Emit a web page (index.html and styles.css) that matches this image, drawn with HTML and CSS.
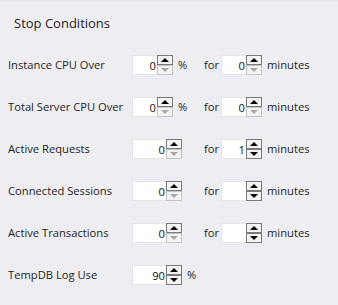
FILE: index.html
```html
<!DOCTYPE html>
<html>
<head>
<meta charset="utf-8">
<link rel="stylesheet" href="styles.css">
</head>
<body>
<div class="panel">
  <h2 class="title">Stop Conditions</h2>
  <div class="rows">
    <div class="row">
      <span class="label">Instance CPU Over</span>
      <span class="cell">
        <span class="spin"><span class="val">0</span><span class="btns"><span class="btn up"></span><span class="btn down off"></span></span></span>
        <span class="unit">%</span>
      </span>
      <span class="for">for</span>
      <span class="spin"><span class="val">0</span><span class="btns"><span class="btn up"></span><span class="btn down off"></span></span></span>
      <span class="unit">minutes</span>
    </div>
    <div class="row">
      <span class="label">Total Server CPU Over</span>
      <span class="cell">
        <span class="spin"><span class="val">0</span><span class="btns"><span class="btn up"></span><span class="btn down off"></span></span></span>
        <span class="unit">%</span>
      </span>
      <span class="for">for</span>
      <span class="spin"><span class="val">0</span><span class="btns"><span class="btn up"></span><span class="btn down off"></span></span></span>
      <span class="unit">minutes</span>
    </div>
    <div class="row">
      <span class="label">Active Requests</span>
      <span class="cell">
        <span class="spin wide"><span class="val">0</span><span class="btns"><span class="btn up"></span><span class="btn down off"></span></span></span>
      </span>
      <span class="for">for</span>
      <span class="spin"><span class="val">1</span><span class="btns"><span class="btn up"></span><span class="btn down"></span></span></span>
      <span class="unit">minutes</span>
    </div>
    <div class="row">
      <span class="label">Connected Sessions</span>
      <span class="cell">
        <span class="spin wide"><span class="val">0</span><span class="btns"><span class="btn up"></span><span class="btn down off"></span></span></span>
      </span>
      <span class="for">for</span>
      <span class="spin"><span class="val"></span><span class="btns"><span class="btn up"></span><span class="btn down"></span></span></span>
      <span class="unit">minutes</span>
    </div>
    <div class="row">
      <span class="label">Active Transactions</span>
      <span class="cell">
        <span class="spin wide"><span class="val">0</span><span class="btns"><span class="btn up"></span><span class="btn down off"></span></span></span>
      </span>
      <span class="for">for</span>
      <span class="spin"><span class="val"></span><span class="btns"><span class="btn up"></span><span class="btn down"></span></span></span>
      <span class="unit">minutes</span>
    </div>
    <div class="row">
      <span class="label">TempDB Log Use</span>
      <span class="cell">
        <span class="spin wide"><span class="val">90</span><span class="btns"><span class="btn up"></span><span class="btn down"></span></span></span>
        <span class="unit">%</span>
      </span>
    </div>
  </div>
</div>
</body>
</html>
```
FILE: styles.css
```css
html, body {
  margin: 0;
  padding: 0;
  background: #eeeef2;
}
body {
  width: 338px;
  height: 305px;
  overflow: hidden;
  font-family: "Open Sans", "Noto Sans", sans-serif;
  color: #1e1e1e;
}
.panel {
  border-top: 1px solid #e2e2e7;
  padding-left: 8px;
}
.title {
  margin: 13px 0 23px 6px;
  font-size: 13px;
  font-weight: normal;
  line-height: 18px;
}
.rows {
  display: flex;
  flex-direction: column;
  gap: 22px;
}
.row {
  display: grid;
  grid-template-columns: 124px 72px 17px 41px auto;
  align-items: center;
  height: 20px;
  font-size: 11.2px;
  line-height: 20px;
}
.cell {
  display: flex;
  align-items: center;
}
.unit {
  margin-left: 5px;
}
.spin {
  display: flex;
  width: 41px;
  height: 20px;
  box-sizing: border-box;
}
.spin.wide {
  width: 50px;
}
.val {
  flex: 1;
  background: #fff;
  border: 1px solid #e4e4e8;
  border-right: none;
  text-align: right;
  padding-right: 1px;
  line-height: 19px;
  color: #111;
}
.btns {
  display: flex;
  flex-direction: column;
  width: 16px;
}
.btn {
  height: 10px;
  box-sizing: border-box;
  border: 1px solid #7a7a7a;
  background: #f3f3f3;
  display: flex;
  align-items: center;
  justify-content: center;
}
.btn::after {
  content: "";
  width: 0;
  height: 0;
  border-left: 4px solid transparent;
  border-right: 4px solid transparent;
}
.btn.up::after {
  border-bottom: 4px solid #000;
}
.btn.down::after {
  border-top: 4px solid #000;
}
.btn.off {
  border-color: #c4c4c4;
}
.btn.down.off::after {
  border-top-color: #a8a8a8;
}
```
